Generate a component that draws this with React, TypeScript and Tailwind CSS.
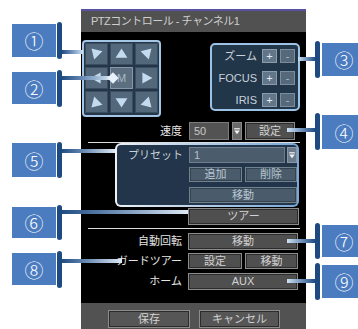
import React from "react";

function GBtn({ className, children }: { className: string; children?: React.ReactNode }) {
  return (
    <div
      className={
        "flex items-center justify-center border border-[#8c8c8c] bg-[#4f4f4f] text-[11px] leading-none text-[#d2d2d2] shadow-[inset_0_0_0_1px_#2c2c2c] " +
        className
      }
    >
      {children}
    </div>
  );
}

function BBtn({ className, children }: { className: string; children?: React.ReactNode }) {
  return (
    <div
      className={
        "flex items-center justify-center border border-[#71828f] bg-[#4a5c6c] text-[11px] leading-none text-[#bac6d2] shadow-[inset_0_0_0_1px_#34434f] " +
        className
      }
    >
      {children}
    </div>
  );
}

function DropArrow({ className }: { className: string }) {
  return (
    <div className={"flex items-center justify-center " + className}>
      <svg width="10" height="16" viewBox="0 0 10 16">
        <rect x="1.5" y="4.5" width="7" height="1.5" fill="#f2f2f2" />
        <polygon points="1.5,7.5 8.5,7.5 5,12" fill="#f2f2f2" />
      </svg>
    </div>
  );
}

const arrows: (string | null)[] = [
  "6,5 18,8 9,17",
  "11.5,5 18,15 5,15",
  "17,5 14,17 5,8",
  "5,11 16,5 16,17",
  null,
  "18,11 7,5 7,17",
  "6,17 9,5 18,14",
  "11.5,17 5,7 18,7",
  "17,17 5,14 14,5",
];

function Pad() {
  return (
    <div className="mt-[8px] ml-[1px] w-[79px] h-[77px] rounded-[4px] border-2 border-[#a4c5e4] bg-[#24374a] p-[1px] grid grid-cols-[23px_23px_23px] grid-rows-[22px_22px_22px] gap-[2px]">
      {arrows.map((p, i) =>
        p ? (
          <div key={i} className="bg-[#53687a] border border-[#3b4e60] flex items-center justify-center">
            <svg width="23" height="22" viewBox="0 0 23 22">
              <polygon points={p} fill="#c3dbee" />
            </svg>
          </div>
        ) : (
          <div
            key={i}
            className="bg-[#5c6f80] border border-[#8797a6] flex items-center justify-center text-[11px] text-[#a9b8c6] leading-none"
          >
            M
          </div>
        )
      )}
    </div>
  );
}

function LensRow({ label }: { label: string }) {
  return (
    <div className="flex items-center h-[14px]">
      <div className="flex-1 text-right pr-[5px] text-[11px] text-[#c9d2db] leading-none">{label}</div>
      <div className="w-[15px] h-[14px] bg-[#62768a] border border-[#8a9cac] flex items-center justify-center text-[11px] text-[#e3ebf2] leading-none">
        +
      </div>
      <div className="ml-[3px] w-[15px] h-[14px] bg-[#56697b] border border-[#7b8d9d] flex items-center justify-center text-[11px] text-[#aebdca] leading-none">
        -
      </div>
    </div>
  );
}

function Lens() {
  return (
    <div className="mt-[11px] ml-auto mr-[6px] w-[90px] h-[68px] rounded-[5px] border-2 border-[#9cc2e6] bg-[#22364a] pt-[4px] pr-[3px] flex flex-col gap-[8px]">
      <LensRow label="ズーム" />
      <LensRow label="FOCUS" />
      <LensRow label="IRIS" />
    </div>
  );
}

function Num({ className, n }: { className: string; n: string }) {
  return (
    <div
      className={
        "absolute w-[44px] bg-[#4b7cc0] flex items-center justify-center text-white text-[19px] leading-none font-['Noto_Sans_CJK_JP',sans-serif] font-light " +
        className
      }
    >
      {n}
    </div>
  );
}

function Bar({ className }: { className: string }) {
  return <div className={"absolute w-[5px] rounded-full bg-[#1d4a80] " + className} />;
}

export default function App() {
  return (
    <div className="relative w-[358px] h-[329px] overflow-hidden bg-white pt-[9px] font-['Liberation_Sans','Noto_Sans_CJK_JP',sans-serif]">
      {/* panel */}
      <div className="ml-[81px] w-[225px] h-[330px] flex flex-col">
        <div className="h-[2px] bg-[#5b51a3]" />
        <div className="h-[21px] bg-[#515151] pl-[10px] flex items-center text-[11px] text-[#cfcfcf] tracking-[-0.5px] leading-none">
          PTZコントロール - チャンネル1
        </div>
        <div className="h-[271px] bg-black flex flex-col">
          <div className="flex items-start h-[85px]">
            <Pad />
            <Lens />
          </div>
          {/* speed */}
          <div className="mt-[5px] h-[18px] flex items-center justify-end pr-[11px]">
            <div className="text-[11px] text-[#e6e6e6] leading-none mr-[7px]">速度</div>
            <div className="w-[40px] h-[18px] bg-[#535353] border border-[#7c7c7c] flex items-center pl-[4px] text-[11px] text-[#c9c9c9] leading-none">
              50
            </div>
            <DropArrow className="ml-[3px] w-[10px] h-[18px] bg-[#6a6a6a] border border-[#8a8a8a]" />
            <GBtn className="ml-[3px] w-[50px] h-[18px]">設定</GBtn>
          </div>
          <div className="mt-[2px] h-[1px] ml-[7px] mr-[6px] bg-[#dcdcdc]" />
          {/* preset box */}
          <div className="ml-[34px] w-[184px] h-[64px] rounded-[6px] p-[2px] bg-linear-to-r from-[#eef2f6] to-[#78a7d6]">
            <div className="w-full h-full rounded-[4px] bg-[#22354a] pt-[2px] flex flex-col">
              <div className="flex items-center h-[16px]">
                <div className="w-[66px] text-right text-[11px] text-[#c7d0d9] leading-none">プリセット</div>
                <div className="ml-[6px] w-[96px] h-[16px] bg-[#4b5c6d] border border-[#6e7e8e] flex items-center pl-[4px] text-[11px] text-[#b3c0cc] leading-none">
                  1
                </div>
                <DropArrow className="ml-[2px] w-[10px] h-[16px] bg-[#6b7b8b] border border-[#8797a5]" />
              </div>
              <div className="mt-[4px] flex pl-[72px] gap-[3px]">
                <BBtn className="w-[53px] h-[15px]">追加</BBtn>
                <BBtn className="w-[52px] h-[15px]">削除</BBtn>
              </div>
              <div className="mt-[5px] flex pl-[72px]">
                <BBtn className="w-[108px] h-[16px]">移動</BBtn>
              </div>
            </div>
          </div>
          <GBtn className="mt-[1px] ml-[107px] w-[111px] h-[17px]">ツアー</GBtn>
          <div className="mt-[3px] h-[1px] ml-[7px] mr-[6px] bg-[#dcdcdc]" />
          <div className="mt-[4px] flex items-center h-[17px]">
            <div className="w-[101px] text-right text-[11px] text-[#e6e6e6] leading-none">自動回転</div>
            <GBtn className="ml-[6px] w-[110px] h-[17px]">移動</GBtn>
          </div>
          <div className="mt-[3px] flex items-center h-[16px]">
            <div className="w-[101px] text-right text-[11px] text-[#e6e6e6] leading-none">ガードツアー</div>
            <GBtn className="ml-[6px] w-[54px] h-[16px]">設定</GBtn>
            <GBtn className="ml-[3px] w-[53px] h-[16px]">移動</GBtn>
          </div>
          <div className="mt-[4px] flex items-center h-[17px]">
            <div className="w-[101px] text-right text-[11px] text-[#e6e6e6] leading-none">ホーム</div>
            <GBtn className="ml-[6px] w-[110px] h-[17px]">AUX</GBtn>
          </div>
        </div>
        <div className="flex-1 bg-[#525252] pl-[27px] pt-[7px] flex gap-[9px]">
          <GBtn className="w-[82px] h-[18px] bg-[#565656]">保存</GBtn>
          <GBtn className="w-[81px] h-[18px] bg-[#565656]">キャンセル</GBtn>
        </div>
      </div>

      {/* left callouts */}
      <Num className="left-[12px] top-[24px] h-[33px]" n="①" />
      <Bar className="left-[57px] top-[22px] h-[37px]" />
      <div className="absolute left-[62px] top-[50px] w-[21px] h-[4px] bg-linear-to-r from-[#1f4d84] to-[#cfe2f4]" />

      <Num className="left-[12px] top-[72px] h-[32px]" n="②" />
      <Bar className="left-[57px] top-[70px] h-[37px]" />
      <div className="absolute left-[62px] top-[76px] w-[50px] h-[4px] bg-linear-to-r from-[#1f4d84] to-[#d8e8f6]" />
      <div className="absolute left-[109px] top-[74px] w-[8px] h-[8px] rotate-45 bg-[#e8f1fa]" />

      <Num className="left-[12px] top-[143px] h-[34px]" n="⑤" />
      <Bar className="left-[57px] top-[142px] h-[36px]" />
      <div className="absolute left-[62px] top-[149px] w-[53px] h-[4px] bg-linear-to-r from-[#1f4d84] to-[#dde9f5]" />

      <Num className="left-[12px] top-[207px] h-[31px]" n="⑥" />
      <Bar className="left-[57px] top-[205px] h-[35px]" />
      <div className="absolute left-[62px] top-[210px] w-[126px] h-[4px] bg-linear-to-r from-[#1f4d84] to-[#dde9f5]" />

      <Num className="left-[12px] top-[253px] h-[32px]" n="⑧" />
      <Bar className="left-[57px] top-[251px] h-[37px]" />
      <div className="absolute left-[62px] top-[259px] w-[60px] h-[4px] bg-linear-to-r from-[#1f4d84] to-[#dde9f5]" />

      {/* right callouts */}
      <Num className="left-[322px] top-[43px] h-[33px]" n="③" />
      <Bar className="left-[315px] top-[41px] h-[37px]" />
      <div className="absolute left-[298px] top-[57px] w-[17px] h-[4px] bg-linear-to-l from-[#1f4d84] to-[#cfe2f4]" />

      <Num className="left-[322px] top-[115px] h-[34px]" n="④" />
      <Bar className="left-[315px] top-[113px] h-[37px]" />
      <div className="absolute left-[287px] top-[128px] w-[28px] h-[4px] bg-linear-to-l from-[#1f4d84] to-[#cfe2f4]" />

      <Num className="left-[322px] top-[225px] h-[32px]" n="⑦" />
      <Bar className="left-[315px] top-[223px] h-[36px]" />
      <div className="absolute left-[287px] top-[239px] w-[28px] h-[4px] bg-linear-to-l from-[#1f4d84] to-[#cfe2f4]" />

      <Num className="left-[322px] top-[265px] h-[33px]" n="⑨" />
      <Bar className="left-[315px] top-[263px] h-[37px]" />
      <div className="absolute left-[287px] top-[279px] w-[28px] h-[4px] bg-linear-to-l from-[#1f4d84] to-[#cfe2f4]" />
    </div>
  );
}
